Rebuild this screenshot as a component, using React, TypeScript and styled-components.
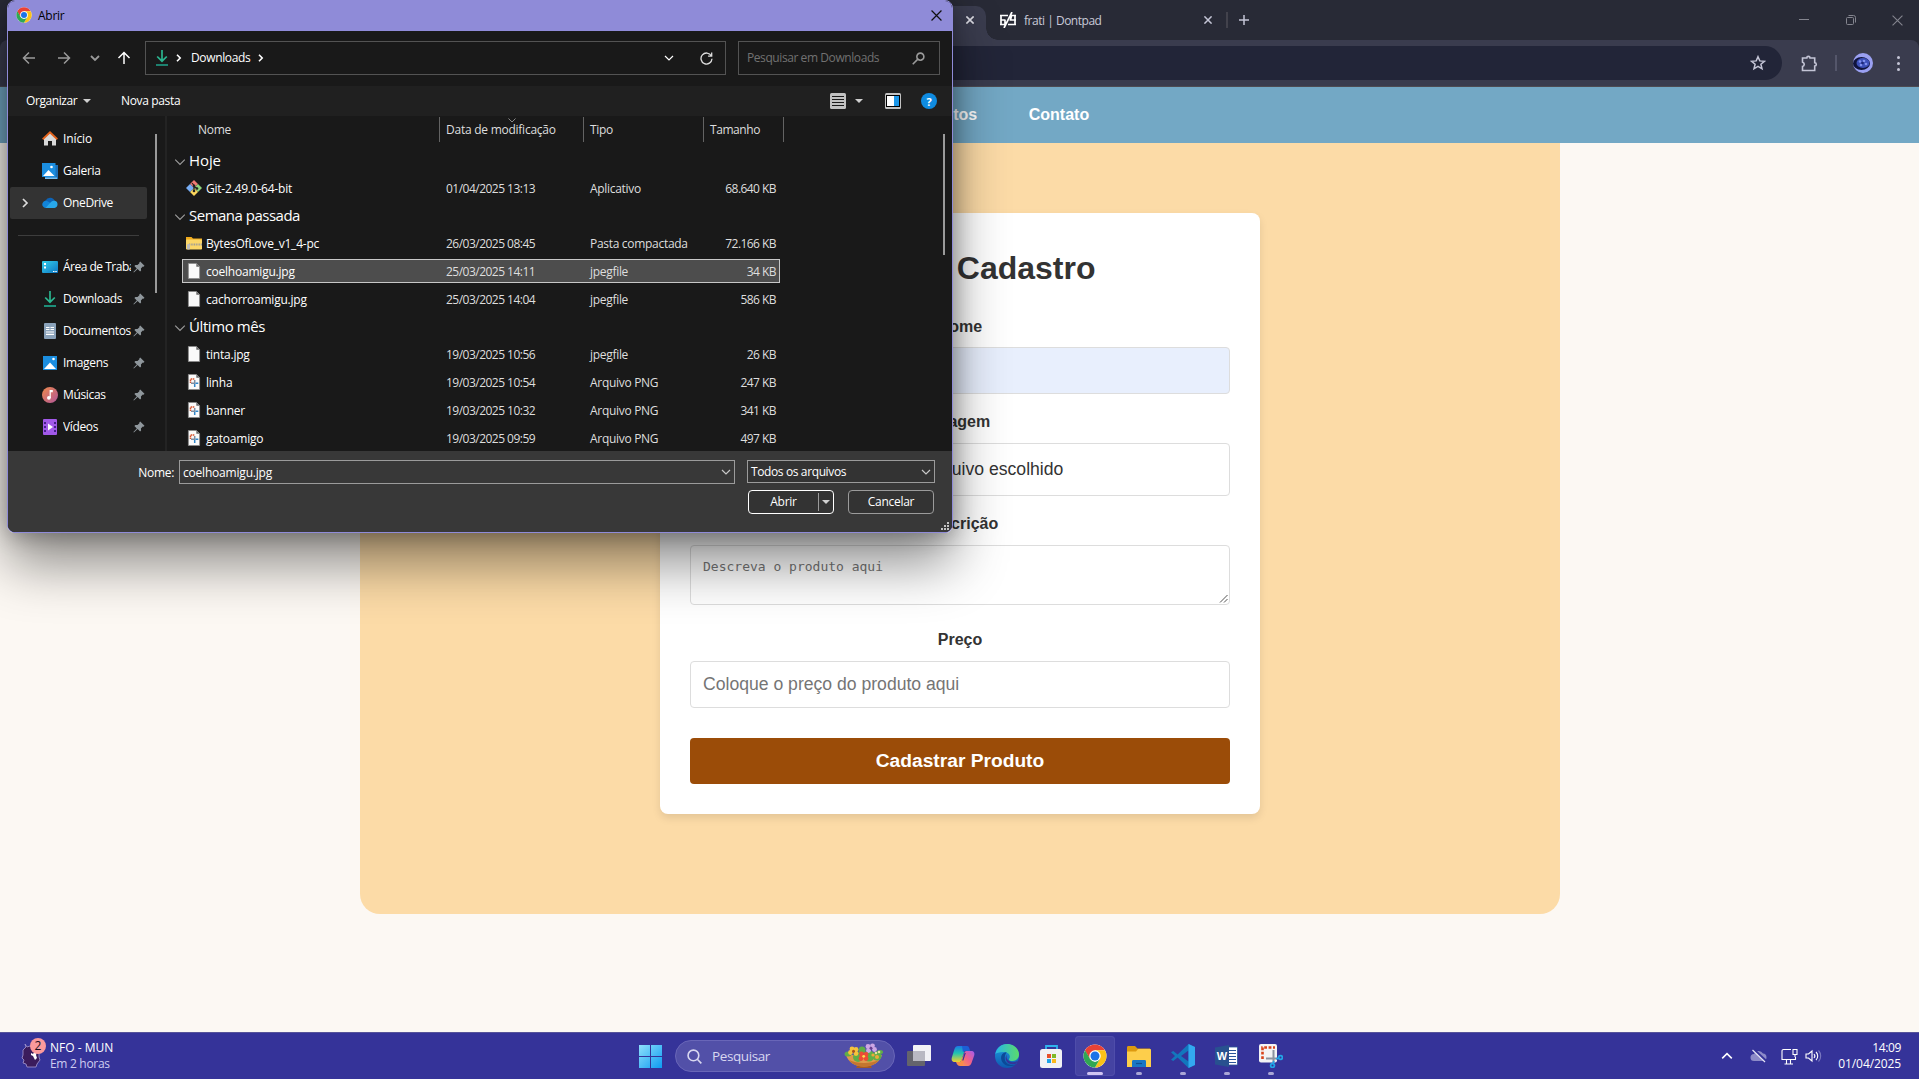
import React from "react";
import styled, { createGlobalStyle } from "styled-components";

const UI = '"Open Sans", "Noto Sans", sans-serif';
const ARIAL = '"Liberation Sans", Arial, sans-serif';

const GlobalStyle = createGlobalStyle`
  * { box-sizing: border-box; }
  html, body { margin: 0; padding: 0; overflow: hidden; background: #fcf8f3; }
  svg { display: block; flex: none; }
`;

const Desktop = styled.div`
  position: relative;
  display: grid;
  grid-template-rows: 1032px 47px;
  width: 1919px;
  height: 1079px;
  overflow: hidden;
  font-family: ${UI};
  font-size: 12px;
`;

const Txt = styled.span<{ $ls?: number; $lift?: number }>`
  padding-bottom: ${(p) => p.$lift ?? 0}px;
  white-space: nowrap;
  letter-spacing: ${(p) => p.$ls ?? -0.3}px;
`;

/* ---------- browser ---------- */

const Browser = styled.div`
  display: flex;
  flex-direction: column;
  background: #fcf8f3;
  min-height: 0;
`;

const TabStrip = styled.div`
  display: flex;
  align-items: center;
  height: 40px;
  padding-left: 748px;
  background: #282a36;
  color: #c8c9d8;
`;

const ActiveTab = styled.div`
  position: relative;
  display: flex;
  align-items: center;
  justify-content: flex-end;
  align-self: flex-end;
  width: 238px;
  height: 34px;
  padding: 0 12px 6px 0;
  border-radius: 10px 10px 0 0;
  background: #3a3c4e;
  &::after {
    content: "";
    position: absolute;
    right: -12px;
    bottom: 0;
    width: 12px;
    height: 12px;
    background: radial-gradient(circle at 100% 0, transparent 11.5px, #3a3c4e 12px);
  }
`;

const Tab = styled.div`
  display: flex;
  align-items: center;
  gap: 8px;
  width: 240px;
  height: 40px;
  padding: 0 14px 0 14px;
  & > svg:last-child { margin-left: auto; }
`;

const TabDivider = styled.i`
  width: 2px;
  height: 16px;
  background: #42424c;
`;

const NewTab = styled.div`
  display: flex;
  margin-left: 11px;
`;

const WindowButtons = styled.div`
  display: flex;
  align-items: center;
  gap: 35px;
  margin-left: auto;
  padding-right: 16px;
`;

const StripBack = styled.div`
  background: #282a36;
`;

const Toolbar = styled.div`
  display: flex;
  align-items: flex-start;
  height: 47px;
  padding: 6px 17px 0 40px;
  border-bottom: 1px solid #4d4b52;
  border-radius: 8px 8px 0 0;
  background: #3a3c4e;
`;

const Omnibox = styled.div`
  display: flex;
  align-items: center;
  justify-content: flex-end;
  width: 1742px;
  height: 34px;
  padding-right: 16px;
  border-radius: 17px;
  background: #222538;
`;

const ToolbarIcons = styled.div`
  display: flex;
  align-items: center;
  height: 34px;
  margin-left: 19px;
`;

const ToolbarDivider = styled.i`
  width: 2px;
  height: 16px;
  margin: 0 16px 0 17px;
  background: #54566a;
`;

const Dots = styled.div`
  display: flex;
  flex-direction: column;
  gap: 3px;
  margin-left: 24px;
  i { width: 3px; height: 3px; border-radius: 50%; background: #c4c5d6; }
`;

const SiteNav = styled.nav`
  display: flex;
  align-items: center;
  gap: 51.5px;
  height: 56px;
  padding: 0 0 0 907px;
  background: #73a8c5;
  color: #fff;
  font: bold 16px ${ARIAL};
`;

const Panel = styled.main`
  width: 1200px;
  height: 771px;
  margin-left: 360px;
  padding-top: 70px;
  border-radius: 0 0 20px 20px;
  background: #fcdba7;
`;

const Card = styled.form`
  display: flex;
  flex-direction: column;
  width: 600px;
  height: 601px;
  margin: 0 auto;
  padding: 30px;
  border-radius: 8px;
  background: #fff;
  box-shadow: 0 4px 8px rgba(0, 0, 0, 0.1);
  color: #333;
  font-family: ${ARIAL};
`;

const Heading = styled.h1`
  margin: 0 0 21px;
  padding-left: 6px;
  font-size: 32px;
  line-height: 50px;
  text-align: center;
`;

const Label = styled.label<{ $drop?: number }>`
  margin-bottom: ${(p) => 9 - (p.$drop ?? 0)}px;
  padding-top: ${(p) => p.$drop ?? 0}px;
  font-size: 16px;
  font-weight: bold;
  line-height: 24px;
  text-align: center;
`;

const Field = styled.div<{ $h: number; $gap: number; $fill?: string }>`
  display: flex;
  align-items: center;
  height: ${(p) => p.$h}px;
  margin-bottom: ${(p) => p.$gap}px;
  padding: 0 12px;
  border: 1px solid #ddd;
  border-radius: 4px;
  background: ${(p) => p.$fill ?? "#fff"};
  color: #757575;
  font-size: 17.6px;
  white-space: nowrap;
`;

const FileStatus = styled.span`
  margin-left: 152px;
  color: #333;
`;

const TextArea = styled(Field)`
  position: relative;
  align-items: flex-start;
  padding-top: 13px;
  font: 13px/15px "DejaVu Sans Mono", monospace;
`;

const ResizeCorner = styled.svg`
  position: absolute;
  right: 1px;
  bottom: 1px;
`;

const Submit = styled.button`
  height: 46px;
  padding: 0 0 1px;
  border: 0;
  border-radius: 4px;
  background: #9b4c08;
  color: #fff;
  font: bold 19.2px ${ARIAL};
`;

/* ---------- file dialog ---------- */

const Dialog = styled.section`
  position: absolute;
  left: 7px;
  top: 0;
  display: grid;
  grid-template-rows: 30px 55px 30px 335px 81px;
  width: 946px;
  height: 533px;
  border: 1px solid #8f8bd8;
  border-radius: 8px;
  overflow: hidden;
  background: #191919;
  color: #fff;
`;

const DialogShadow = styled.div`
  position: absolute;
  left: 7px;
  top: 0;
  width: 946px;
  height: 533px;
  border-radius: 8px;
  box-shadow: 0 31px 54px rgba(0, 0, 0, 0.44), 0 2px 21px rgba(0, 0, 0, 0.3);
`;

const TitleBar = styled.header`
  display: flex;
  align-items: center;
  gap: 6px;
  padding: 0 10px 2px 8px;
  background: #8f8bd8;
  color: #000;
  & > svg:last-child { margin-left: auto; }
`;

const AddressRow = styled.div`
  display: flex;
  align-items: center;
  padding: 0 12px 1px 14px;
`;

const NavButtons = styled.div`
  display: flex;
  align-items: center;
  width: 123px;
  & > :nth-child(2) { margin-left: 21px; }
  & > :nth-child(3) { margin-left: 18.5px; }
  & > :nth-child(4) { margin-left: 17px; }
`;

const AddressBox = styled.div`
  display: flex;
  align-items: center;
  width: 581px;
  height: 34px;
  padding: 0 12px 0 9px;
  border: 1px solid #535353;
`;

const Crumb = styled(Txt)`
  margin: 0 8px 0 9px;
`;

const CrumbStart = styled.div`
  display: flex;
  width: 27px;
  justify-content: space-between;
`;

const CrumbIcons = styled.div`
  display: flex;
  align-items: center;
  justify-content: space-between;
  width: 27px;
`;

const AddressTools = styled.div`
  display: flex;
  align-items: center;
  gap: 26px;
  margin-left: auto;
`;

const SearchBox = styled.div`
  display: flex;
  align-items: center;
  justify-content: space-between;
  width: 202px;
  height: 34px;
  margin-left: 12px;
  padding: 0 14px 0 8px;
  border: 1px solid #535353;
  color: #717171;
`;

const CommandBar = styled.div`
  display: flex;
  align-items: center;
  padding: 0 15px 0 18px;
  background: #202020;
`;

const Caret = styled.i`
  border: 4px solid transparent;
  border-top-color: #d0d0d0;
  border-bottom: 0;
`;

const Organize = styled.div`
  display: flex;
  align-items: center;
  gap: 6px;
  width: 95px;
`;

const CommandIcons = styled.div`
  display: flex;
  align-items: center;
  margin-left: auto;
  & > i { margin: 0 22px 0 9px; }
  & > svg + svg { margin-left: 20px; }
`;

const Body = styled.div`
  display: grid;
  grid-template-columns: 147px 12px 1fr;
  overflow: hidden;
`;

const Sidebar = styled.div`
  display: flex;
  flex-direction: column;
  padding: 7px 8px 0 2px;
`;

const SideItem = styled.div<{ $active?: boolean }>`
  display: grid;
  grid-template-columns: 32px 16px 68px 14px;
  align-items: center;
  width: 137px;
  height: 32px;
  border-radius: 2px;
  background: ${(p) => (p.$active ? "#333" : "transparent")};
  & > span { margin-left: 5px; }
`;

const SideLabel = styled(Txt)<{ $wide?: boolean }>`
  overflow: hidden;
  width: ${(p) => (p.$wide ? "auto" : "68px")};
`;

const Expander = styled.div`
  display: flex;
  padding-left: 10px;
`;

const PinSlot = styled.div`
  display: flex;
  padding-left: 7px;
`;

const SideDivider = styled.div`
  display: flex;
  align-items: center;
  height: 32px;
  padding: 0 8px;
  &::after { content: ""; width: 121px; height: 1px; background: #3d3d3d; }
`;

const SideScroll = styled.div`
  border-right: 2px solid #232323;
  padding-top: 18px;
  &::after { content: ""; display: block; width: 2px; height: 159px; background: #9a9a9a; }
`;

const ListArea = styled.div`
  display: grid;
  grid-template-columns: 1fr 9px;
  overflow: hidden;
`;

const ListScroll = styled.div`
  padding-top: 18px;
  &::after { content: ""; display: block; width: 2px; height: 121px; background: #9a9a9a; }
`;

const List = styled.div`
  display: flex;
  flex-direction: column;
  padding-left: 7px;
`;

const ListHeader = styled.div`
  display: grid;
  grid-template-columns: 266px 144px 120px 80px;
  height: 32px;
  padding-top: 1px;
  color: #dedede;
`;

const HeaderCell = styled.div<{ $pad: number }>`
  position: relative;
  display: flex;
  align-items: center;
  height: 25px;
  padding: 0 0 1px ${(p) => p.$pad}px;
  border-right: 1px solid #636363;
`;

const SortMark = styled.svg`
  position: absolute;
  left: 68px;
  top: 1px;
`;

const GroupRow = styled.div`
  display: flex;
  align-items: center;
  gap: 3px;
  height: 27px;
  color: #fff;
  font-size: 15px;
`;

const FileSlot = styled.div`
  display: flex;
  height: 28px;
  padding: 1px 0 3px 8px;
  flex: none;
`;

const FileRow = styled.div<{ $selected?: boolean }>`
  display: grid;
  grid-template-columns: 20px 240px 144px 127px 59px;
  align-items: center;
  width: 598px;
  height: 24px;
  padding-left: 3px;
  border: 1px solid ${(p) => (p.$selected ? "#c8c8c8" : "transparent")};
  background: ${(p) => (p.$selected ? "#4d4d4d" : "transparent")};
  color: #dedede;
`;

const FileName = styled(Txt)`
  color: #fff;
`;

const Size = styled(Txt)`
  text-align: right;
`;

const Footer = styled.footer`
  display: grid;
  grid-template-columns: 171px 556px 188px;
  grid-template-rows: 24px 24px;
  row-gap: 6px;
  align-content: start;
  padding-top: 9px;
  background: #383838;
  position: relative;
`;

const NameLabel = styled(Txt)`
  justify-self: end;
  align-self: center;
  margin-right: 5px;
`;

const Combo = styled.div<{ $h: number }>`
  display: flex;
  align-items: center;
  justify-content: space-between;
  height: ${(p) => p.$h}px;
  padding: 0 3px 0 3px;
  border: 1px solid #9b9b9b;
  background: ${(p) => (p.$h === 24 ? "#383838" : "#333")};
`;

const FilterCombo = styled(Combo)`
  margin-left: 12px;
  width: 188px;
`;

const Buttons = styled.div`
  grid-column: 3;
  display: flex;
  gap: 14px;
  padding-left: 13px;
`;

const DialogButton = styled.div<{ $main?: boolean }>`
  display: flex;
  align-items: center;
  justify-content: center;
  width: 86px;
  flex: none;
  height: 24px;
  border: 1px solid ${(p) => (p.$main ? "#fff" : "#9b9b9b")};
  border-radius: 4px;
  background: #333;
`;

const MainLabel = styled(Txt)`
  width: 69px;
  text-align: center;
`;

const Split = styled.div`
  display: flex;
  align-items: center;
  width: 15px;
  height: 18px;
  padding-left: 3px;
  border-left: 1px solid #9b9b9b;
`;

const Grip = styled.svg`
  position: absolute;
  right: 3px;
  bottom: 2px;
`;

/* ---------- taskbar ---------- */

const Taskbar = styled.footer`
  display: grid;
  grid-template-columns: 628px 47px 222px 396px 1fr;
  align-items: center;
  border-top: 1px solid #56539a;
  background: #353399;
  color: #fff;
`;

const Widget = styled.div`
  display: flex;
  align-items: center;
  gap: 4px;
  padding-left: 20px;
`;

const TwoLines = styled.div<{ $right?: boolean }>`
  display: flex;
  flex-direction: column;
  line-height: 16px;
  text-align: ${(p) => (p.$right ? "right" : "left")};
  & > span + span { color: ${(p) => (p.$right ? "#fff" : "#cfcdf0")}; }
`;

const Start = styled.div`
  display: flex;
  padding: 1px 0 0 11px;
`;

const SearchPill = styled.div`
  display: flex;
  align-items: center;
  width: 220px;
  height: 32px;
  padding: 0 10px 0 11px;
  border: 1px solid #6966b8;
  border-radius: 16px;
  background: #5250a8;
  color: #d8d7f0;
  font-size: 13.5px;
  & > span { margin-left: 10px; }
  & > svg:last-child { margin-left: auto; }
`;

const Apps = styled.div`
  display: grid;
  grid-template-columns: repeat(9, 44px);
`;

const TaskButton = styled.div<{ $state: "none" | "open" | "active" }>`
  display: flex;
  flex-direction: column;
  align-items: center;
  justify-self: center;
  width: 40px;
  height: 40px;
  padding-top: 8px;
  border-radius: 4px;
  background: ${(p) => (p.$state === "active" ? "#4543a2" : "transparent")};
  box-shadow: ${(p) => (p.$state === "active" ? "inset 0 0 0 1px #4f4daa" : "none")};
  &::after {
    content: "";
    width: ${(p) => (p.$state === "active" ? 16 : p.$state === "open" ? 6 : 0)}px;
    height: 3px;
    margin-top: 4px;
    border-radius: 2px;
    background: ${(p) => (p.$state === "active" ? "#cfc4f2" : "#a9a6d6")};
  }
`;

const Tray = styled.div`
  display: flex;
  align-items: center;
  justify-content: flex-end;
  padding-right: 18px;
`;

const TrayIcons = styled.div`
  display: grid;
  grid-template-columns: 10px 50px 24px 18px;
  align-items: center;
  margin-right: 15px;
  & > :nth-child(2) { margin-left: 19px; }
`;

/* ---------- drawings ---------- */

const X = ({ s = 10, c, w = 1 }: { s?: number; c: string; w?: number }) => (
  <svg width={s} height={s} viewBox="0 0 10 10" stroke={c} strokeWidth={w} fill="none">
    <path d="M.5.5l9 9M9.5.5l-9 9" />
  </svg>
);

const Chev = ({ d, s = 10, c = "#fff", w = 1.4 }: { d: "down" | "right" | "up"; s?: number; c?: string; w?: number }) => (
  <svg width={s} height={s} viewBox="0 0 10 10" fill="none" stroke={c} strokeWidth={w}>
    <path d={d === "down" ? "M1 3l4 4 4-4" : d === "up" ? "M1 7l4-4 4 4" : "M3 1l4 4-4 4"} />
  </svg>
);

const CrumbChevron = () => (
  <svg width="6" height="8" viewBox="0 0 6 8" fill="none" stroke="#fff" strokeWidth="1.6">
    <path d="M1 .8L4.200 4 1 7.200" />
  </svg>
);

const Arrow = ({ r, c }: { r: number; c: string }) => (
  <svg width="14" height="14" viewBox="0 0 14 14" fill="none" stroke={c} strokeWidth="1.5">
    <path d="M13 7H1.5M7 1.5L1.5 7 7 12.5" transform={`rotate(${r} 7 7)`} />
  </svg>
);

const ChromeLogo = ({ s }: { s: number }) => (
  <svg width={s} height={s} viewBox="0 0 48 48">
    <circle cx="24" cy="24" r="23" fill="#fff" />
    <path fill="#e94235" d="M4.1 12.5A23 23 0 0 1 43.9 12.5H24A11.5 11.5 0 0 0 14 29.7z" />
    <path fill="#e94235" d="M4.1 12.5L14 29.7 24 24V12.5z" />
    <path fill="#fbc116" d="M43.9 12.5A23 23 0 0 1 24 47l10-17.3L24 12.5z" />
    <path fill="#30a753" d="M24 47A23 23 0 0 1 4.1 12.5L14 29.7 24 35.5l10-5.8z" />
    <circle cx="24" cy="24" r="11.5" fill="#fff" />
    <circle cx="24" cy="24" r="9" fill="#1a73e8" />
  </svg>
);

const DownloadIcon = ({ w = 14 }: { w?: number }) => (
  <svg width={w} height="16" viewBox="0 0 14 16" fill="none" strokeWidth="1.7">
    <path d="M7 0v10.500M2.200 6.500L7 11.200l4.800-4.700" stroke="#2bb58f" />
    <path d="M1 15h12" stroke="#1fa58c" />
  </svg>
);

const Pin = () => (
  <svg width="12" height="12" viewBox="0 0 12 12" fill="#8f979c">
    <path d="M7.200.5L11.500 4.800l-.9.900-.8-.1-1.900 1.900.2 2.100-1 1L4.600 8.100.9 11.500l-.5-.4L3.800 7.400 1.400 4.900l1-1 2.100.2 1.900-1.900-.1-.8z" />
  </svg>
);

const HomeIcon = () => (
  <svg width="16" height="16" viewBox="0 0 16 16">
    <path fill="#d9d9d9" d="M2 7l6-5 6 5v7.500h-4V10H6v4.500H2z" />
    <path fill="none" stroke="#e2621b" strokeWidth="1.900" d="M.7 8.200L8 1.400l7.300 6.800" />
  </svg>
);

const PictureIcon = ({ stacked }: { stacked?: boolean }) => (
  <svg width="16" height="16" viewBox="0 0 16 16">
    {stacked && <path fill="#1b6fb8" d="M3 2h13v14H3z" />}
    {stacked && <path fill="#75bff0" d="M3 14.500h12V16H3z" />}
    <path fill="#1b8ee0" d={stacked ? "M0 0h13.500v14H0z" : "M1 1h14v14H1z"} />
    <path fill="#fff" d={stacked ? "M1 13l5.500-6 6 6z" : "M2 14l6-6.500 6 6.500z"} />
    <circle cx={stacked ? 9.5 : 11.5} cy="4" r="1.300" fill="#fff" />
  </svg>
);

const CloudIcon = () => (
  <svg width="16" height="12" viewBox="0 0 16 12">
    <path fill="#0d63b5" d="M4 10a3.500 3.500 0 0 1-.4-6.500A5 5 0 0 1 12.800 4L8 9z" />
    <path fill="#1284d8" d="M3.600 11A3.600 3.600 0 1 1 6 4.500L13 9z" />
    <path fill="#28a8ea" d="M3.500 11l5-5.500a4 4 0 0 1 4.300-1.700A3.700 3.700 0 0 1 12.500 11z" />
  </svg>
);

const DesktopIcon = () => (
  <svg width="16" height="12" viewBox="0 0 16 12">
    <defs>
      <linearGradient id="desk" x1="0" x2="1" y1="0" y2="1">
        <stop stopColor="#35d0ea" />
        <stop offset="1" stopColor="#0d76c4" />
      </linearGradient>
    </defs>
    <rect width="16" height="12" rx="1" fill="url(#desk)" />
    <path fill="#fff" d="M2 2h2v2H2zM2 5.500h2v2H2zM11 10h1.500v1H11zM13.300 10h1.500v1h-1.500z" />
  </svg>
);

const DocIcon = () => (
  <svg width="16" height="16" viewBox="0 0 16 16">
    <rect x="2" width="12" height="16" rx="1" fill="#8aa2ba" />
    <path stroke="#fff" strokeWidth="1.200" d="M4 4.500h3.500M4 6.500h3.500M8.500 4.500H12M8.500 6.500H12M4 9h8M4 11.300h8" />
  </svg>
);

const MusicIcon = () => (
  <svg width="16" height="16" viewBox="0 0 16 16">
    <defs>
      <linearGradient id="mus" x1="0" x2="1" y1="0" y2="1">
        <stop stopColor="#f08a4b" />
        <stop offset="1" stopColor="#b0569a" />
      </linearGradient>
    </defs>
    <circle cx="8" cy="8" r="8" fill="url(#mus)" />
    <circle cx="6.900" cy="10.800" r="1.900" fill="#fff" />
    <path fill="#fff" d="M7.600 3h3.200v2.300H8.800V11H7.600z" />
  </svg>
);

const VideoIcon = () => (
  <svg width="16" height="16" viewBox="0 0 16 16">
    <rect x="1" width="14" height="16" rx="1" fill="#a259ea" />
    <path fill="#47208a" d="M2 3h2v2H2zM2 7h2v2H2zM2 11h2v2H2zM12 3h2v2h-2zM12 7h2v2h-2zM12 11h2v2h-2z" />
    <path fill="#fff" d="M6 4.500l5 3.500-5 3.500z" />
  </svg>
);

const FileIcon = ({ png }: { png?: boolean }) => (
  <svg width="16" height="16" viewBox="0 0 16 16">
    <path fill="#fafafa" stroke="#8a8a8a" strokeWidth=".8" d="M2.400.4h8l3.200 3.200v12H2.400z" />
    <path fill="#666" d="M10.300.4l3.300 3.300h-3.300z" />
    {png && (
      <g fill="none" strokeWidth="1.500">
        <path stroke="#d8502a" strokeDasharray="1.500 .6" d="M4.500 9V5h4" />
        <path stroke="#7f8da0" d="M5 9.200h4.500M8.700 6v4" />
        <path stroke="#2f86c9" d="M9.500 9.200h2.800M8.700 10v3" />
      </g>
    )}
  </svg>
);

const GitIcon = () => (
  <svg width="16" height="16" viewBox="0 0 16 16">
    <path fill="#f07a72" d="M8 0l4 4-4 4-4-4z" />
    <path fill="#8fd47c" d="M12 4l4 4-4 4-4-4z" />
    <path fill="#fbd65c" d="M8 8l4 4-4 4-4-4z" />
    <path fill="#78aef5" d="M4 4l4 4-4 4-4-4z" />
    <path stroke="#222" strokeWidth="1.200" fill="none" d="M6 3l2 2.500V11M8 6.500l3 2" />
    <g fill="#222"><circle cx="8" cy="5.800" r="1.300" /><circle cx="8" cy="11" r="1.300" /><circle cx="11" cy="8.500" r="1.300" /></g>
  </svg>
);

const ZipIcon = () => (
  <svg width="16" height="14" viewBox="0 0 16 14">
    <path fill="#f0ab1c" d="M0 1h5.500L7 2.500h9V7H0z" />
    <rect y="3.500" width="16" height="10" rx=".8" fill="#fbd668" />
    <path stroke="#9a9a9a" strokeWidth="2" strokeDasharray="1 .7" d="M3 8.500h13" />
    <rect x="1" y="8" width="3" height="5.500" rx="1" fill="#bdbdbd" />
  </svg>
);

const ViewIcon = () => (
  <svg width="16" height="16" viewBox="0 0 16 16">
    <rect width="16" height="16" rx="1.500" fill="#c2c2c2" />
    <path stroke="#1a1a1a" strokeWidth="1" d="M2 3.500h12M2 6.500h12M2 9.500h12M2 12.500h12" />
  </svg>
);

const PaneIcon = () => (
  <svg width="16" height="16" viewBox="0 0 16 16">
    <rect width="16" height="16" rx="1.500" fill="#c2c2c2" />
    <path fill="#000" d="M1 2h14v12H1z" />
    <path fill="#fff" d="M2 3h7v10H2z" />
    <path fill="#1b96e8" d="M9 3h5v10H9z" />
  </svg>
);

const Help = styled.b`
  display: flex;
  align-items: center;
  justify-content: center;
  width: 16px;
  height: 16px;
  margin-left: 20px;
  border-radius: 50%;
  background: #0f8be0;
  font-size: 11px;
`;

const Magnifier = ({ s, c, w, flip }: { s: number; c: string; w: number; flip?: boolean }) => (
  <svg width={s} height={s} viewBox="0 0 14 14" fill="none" stroke={c} strokeWidth={w}>
    <g transform={flip ? "matrix(-1 0 0 1 14 0)" : undefined}>
      <circle cx={flip ? 5 : 6} cy={flip ? 5 : 6} r={flip ? 3.8 : 5} />
      <path d={flip ? "M7.700 7.700l5.500 5.500" : "M9.600 9.600l3.800 3.800"} />
    </g>
  </svg>
);

const Bowl = () => (
  <svg width="40" height="26" viewBox="0 0 40 26">
    <path fill="#a65a22" d="M14 22h12l2 3H12z" />
    <path fill="#e09a4a" d="M2 12h36c-2 7-9 11.500-18 11.500S4 19 2 12z" />
    <path fill="#c4762e" d="M5 17c8 4 22 4 30 0-4 5-9 6.500-15 6.500S9 22 5 17z" />
    <g fill="#5fae48"><ellipse cx="4" cy="11" rx="3.500" ry="2.500" /><circle cx="14" cy="14" r="5" /><circle cx="25" cy="13" r="5.500" /><circle cx="33" cy="13" r="4.500" /><circle cx="18" cy="7" r="3.500" /><ellipse cx="36" cy="9" rx="3" ry="2" /></g>
    <g fill="#f5c33b"><circle cx="8" cy="6" r="2.400" /><circle cx="12" cy="6.500" r="2.400" /><circle cx="6.500" cy="9.500" r="2.400" /><circle cx="12" cy="10.500" r="2.400" /></g>
    <circle cx="9.500" cy="8.300" r="1.500" fill="#a8531b" />
    <g fill="#cda6e4"><circle cx="24" cy="3.500" r="2.400" /><circle cx="28.500" cy="2.800" r="2.400" /><circle cx="30.500" cy="6.500" r="2.400" /><circle cx="24.500" cy="7.500" r="2.400" /></g>
    <circle cx="27" cy="5.200" r="1.400" fill="#6c3e92" />
    <g fill="#ef4b35"><circle cx="17.500" cy="11" r="2.400" /><circle cx="22" cy="11.500" r="2.400" /><circle cx="17" cy="15.500" r="2.400" /><circle cx="22" cy="15.500" r="2.400" /></g>
    <circle cx="19.700" cy="13.300" r="1.400" fill="#ffd84d" />
    <g fill="#f0a93a"><circle cx="33" cy="14" r="2" /><circle cx="29" cy="12" r="1.600" /></g>
    <g fill="#e9e2a0"><circle cx="35" cy="9" r="1.300" /><circle cx="32" cy="10" r="1.200" /></g>
  </svg>
);

const TaskViewIcon = () => (
  <svg width="24" height="24" viewBox="0 0 24 24">
    <rect x="6" y="1" width="18" height="16" rx="1" fill="#f2f2f5" />
    <rect y="7" width="18" height="15" rx="1" fill="#64646c" />
    <path fill="#b9b9c2" d="M6 7h12v10H6z" />
  </svg>
);

const CopilotIcon = () => (
  <svg width="24" height="24" viewBox="0 0 24 24" strokeLinejoin="round">
    <defs>
      <linearGradient id="cpA" x1="0" x2="0" y1="0" y2="1">
        <stop stopColor="#1b78e6" /><stop offset=".45" stopColor="#21c3b0" /><stop offset="1" stopColor="#f3d02c" />
      </linearGradient>
      <linearGradient id="cpB" x1="1" x2="0" y1="0" y2="1">
        <stop stopColor="#a35cf0" /><stop offset=".5" stopColor="#f0608a" /><stop offset="1" stopColor="#fb9a45" />
      </linearGradient>
    </defs>
    <path fill="url(#cpA)" d="M7 2h8l-4.500 14.500C10 18 9 18 8 18H4c-3 0-4-2-3-5l2.500-8C4.200 3 5.200 2 7 2z" />
    <path fill="#1c5fd6" d="M11 2h5c1.500 0 2 1 2.500 3l.8 2H14c-1 0-1.600.6-2 1.500z" />
    <path fill="url(#cpB)" d="M15.500 7H20c3 0 4 2 3 5l-2.500 7c-.8 2-1.800 3-3.500 3H9.500l3-11c.6-2 1.500-4 3-4z" />
    <path fill="#f78c4a" d="M5 18h4.500l2-5 2 1-2 8H9c-2 0-3-1.500-4-4z" />
    <path fill="#353399" d="M13.500 9l-2.300 7.500h1.200l2.400-7.500z" />
  </svg>
);

const EdgeIcon = () => (
  <svg width="24" height="24" viewBox="0 0 24 24">
    <defs>
      <linearGradient id="edA" x1="0" x2="1"><stop stopColor="#27b4e8" /><stop offset="1" stopColor="#5bdc6a" /></linearGradient>
      <linearGradient id="edB" x1="0" x2="0" y1="0" y2="1"><stop stopColor="#1ea0e0" /><stop offset="1" stopColor="#0f58b0" /></linearGradient>
    </defs>
    <circle cx="12" cy="12" r="12" fill="url(#edB)" />
    <path fill="url(#edA)" d="M.3 10C1.500 4 6.300 0 12 0c7 0 12 5 12 10.500 0 4-3 6.500-6.500 6.500-2.500 0-4-1-3.500-2 1.500-1.500 1.300-6-3.500-6.800C6 7.500 1.500 9 .3 10z" />
    <path fill="#0c4a98" d="M10.500 8.300C5 9.500 5 16 8.500 19.500c3.500 3.500 9 3 12.300.9C16 22.300 9 20 9.800 13c.2-2 1-3.500 2-4.400z" />
    <path fill="#353399" d="M12 10.500c-1 2-.5 5 2.500 6.800 2.700 1.500 6 1 8.500-.8-.7 1.500-1.500 2.500-2.600 3.400-3.600 1-7.400.1-9-2.900-1.300-2.500-.9-5 .6-6.500z" />
  </svg>
);

const StoreIcon = () => (
  <svg width="24" height="24" viewBox="0 0 24 24">
    <path fill="none" stroke="#2fb2ee" strokeWidth="1.800" d="M7 6V2h11v4" />
    <rect x="1" y="5" width="22" height="19" rx="2.500" fill="#f1f1f4" />
    <path fill="#e8502a" d="M8 10h4v4H8z" /><path fill="#7fb92a" d="M13 10h4v4h-4z" />
    <path fill="#1fa3e8" d="M8 15h4v4H8z" /><path fill="#fbb81b" d="M13 15h4v4h-4z" />
  </svg>
);

const FolderIcon = () => (
  <svg width="24" height="24" viewBox="0 0 24 24">
    <path fill="#dd9a10" d="M0 3.500C0 2.500.6 2 1.500 2H8l2.500 2.500H23V9H0z" />
    <path fill="#fdce4b" d="M0 7.500h9L11 5h12c.7 0 1 .4 1 1v17H0z" />
    <path fill="#1976c5" d="M5 17.500c0-1 .6-1.500 1.500-1.500h11c1 0 1.500.5 1.500 1.500V23H5z" />
    <path stroke="#0f4f90" strokeWidth="1.200" d="M9 19.500h6" />
  </svg>
);

const CodeIcon = () => (
  <svg width="24" height="24" viewBox="0 0 24 24">
    <path fill="#1277bd" d="M17.500 0L6.600 10.400 2.300 7 0 8.200 4 12 0 15.800 2.300 17l4.300-3.400L17.500 24 24 21V3zM17.500 6.500v11L10 12z" />
    <path fill="#33a9f0" d="M17.500 0L24 3v18l-6.500 3z" />
  </svg>
);

const WordIcon = () => (
  <svg width="24" height="24" viewBox="0 0 24 24">
    <path fill="#fff" stroke="#2b579a" strokeWidth=".8" d="M12 3h10.500v18H12z" />
    <path stroke="#2b579a" strokeWidth="1.200" d="M14 6.500h7M14 9.500h7M14 12.500h7M14 15.500h7M14 18.500h7" />
    <path fill="#28518f" d="M0 3.500L14 1v22L0 20.500z" />
    <text x="7" y="16" fill="#fff" fontFamily={ARIAL} fontSize="11" fontWeight="bold" textAnchor="middle">W</text>
  </svg>
);

const SnipIcon = () => (
  <svg width="24" height="24" viewBox="0 0 24 24">
    <rect width="18" height="18.500" rx="2" fill="#f3f3f5" />
    <path fill="none" stroke="#d9441c" strokeWidth="2.600" strokeDasharray="2.800 1.600" d="M3.500 15V3.500H16" />
    <path fill="none" stroke="#8b93a0" strokeWidth="2" d="M7 14.500h11M14.500 6v12" />
    <g fill="none" stroke="#22a4e6" strokeWidth="1.800"><circle cx="21.500" cy="13.500" r="1.900" /><circle cx="13.500" cy="21.500" r="1.900" /><path d="M17 14.800l3-.8M14.800 17l-.8 3" /></g>
  </svg>
);

const WindowsIcon = () => (
  <svg width="23" height="23" viewBox="0 0 23 23">
    <defs>
      <linearGradient id="win" x1="0" x2="1" y1="0" y2="1" gradientUnits="userSpaceOnUse" gradientTransform="scale(23)">
        <stop stopColor="#8fe0fb" /><stop offset="1" stopColor="#0d9bf2" />
      </linearGradient>
    </defs>
    <path fill="url(#win)" d="M0 0h11v11H0zM12 0h11v11H12zM0 12h11v11H0zM12 12h11v11H12z" />
  </svg>
);

const LeagueIcon = () => (
  <svg width="26" height="32" viewBox="0 2 26 32" overflow="visible">
    <path fill="#3b1c5c" stroke="#a79ad0" strokeWidth=".8" d="M5 6l2 3 3-1 4 2 4 3 1 2v4l1 3-3 4-1 3H7l-1-3-3-1 1-3-2-2 1-3 0-5 3-3z" />
    <path fill="#fff" d="M11 15l2 1 2-3 2 1-1 3 1 3-2 2-2-4-2-1z" />
    <circle cx="18" cy="8" r="8" fill="#fb9a9c" />
    <text x="18" y="12.300" textAnchor="middle" fontFamily={UI} fontSize="12" fill="#1a1020">2</text>
  </svg>
);

const Avatar = () => (
  <svg width="20" height="20" viewBox="0 0 20 20">
    <circle cx="10" cy="10" r="10" fill="#9aa0f2" />
    <ellipse cx="8.500" cy="10.500" rx="8.500" ry="6.500" fill="#10143c" />
    <ellipse cx="10" cy="10" rx="6.500" ry="5" fill="#3c4fb8" />
    <g fill="#8090ee"><circle cx="7" cy="8.500" r="1.300" /><circle cx="11" cy="8" r="1.300" /><circle cx="13" cy="11" r="1.300" /><circle cx="8" cy="12" r="1.300" /></g>
    <circle cx="9.500" cy="10" r="1.300" fill="#1d2878" />
  </svg>
);

/* ---------- content ---------- */

type Place = { name: string; icon: React.ReactNode; pinned?: boolean; active?: boolean; ls?: number };

const home: Place[] = [
  { name: "Início", icon: <HomeIcon />, ls: -0.1 },
  { name: "Galeria", icon: <PictureIcon stacked /> },
  { name: "OneDrive", icon: <CloudIcon />, active: true, ls: -0.35 },
];

const pinned: Place[] = [
  { name: "Área de Trabalho", icon: <DesktopIcon />, pinned: true, ls: -0.5 },
  { name: "Downloads", icon: <DownloadIcon w={16} />, pinned: true, ls: -0.38 },
  { name: "Documentos", icon: <DocIcon />, pinned: true, ls: -0.35 },
  { name: "Imagens", icon: <PictureIcon />, pinned: true, ls: -0.35 },
  { name: "Músicas", icon: <MusicIcon />, pinned: true, ls: -0.35 },
  { name: "Vídeos", icon: <VideoIcon />, pinned: true, ls: -0.35 },
];

type Item = { name: string; icon: React.ReactNode; date: string; type: string; size: string; selected?: boolean };

const groups: { title: string; ls: number; items: Item[] }[] = [
  {
    title: "Hoje",
    ls: -0.1,
    items: [{ name: "Git-2.49.0-64-bit", icon: <GitIcon />, date: "01/04/2025 13:13", type: "Aplicativo", size: "68.640 KB" }],
  },
  {
    title: "Semana passada",
    ls: -0.5,
    items: [
      { name: "BytesOfLove_v1_4-pc", icon: <ZipIcon />, date: "26/03/2025 08:45", type: "Pasta compactada", size: "72.166 KB" },
      { name: "coelhoamigu.jpg", icon: <FileIcon />, date: "25/03/2025 14:11", type: "jpegfile", size: "34 KB", selected: true },
      { name: "cachorroamigu.jpg", icon: <FileIcon />, date: "25/03/2025 14:04", type: "jpegfile", size: "586 KB" },
    ],
  },
  {
    title: "Último mês",
    ls: -0.4,
    items: [
      { name: "tinta.jpg", icon: <FileIcon />, date: "19/03/2025 10:56", type: "jpegfile", size: "26 KB" },
      { name: "linha", icon: <FileIcon png />, date: "19/03/2025 10:54", type: "Arquivo PNG", size: "247 KB" },
      { name: "banner", icon: <FileIcon png />, date: "19/03/2025 10:32", type: "Arquivo PNG", size: "341 KB" },
      { name: "gatoamigo", icon: <FileIcon png />, date: "19/03/2025 09:59", type: "Arquivo PNG", size: "497 KB" },
    ],
  },
];

const apps: { icon: React.ReactNode; state: "none" | "open" | "active" }[] = [
  { icon: <TaskViewIcon />, state: "none" },
  { icon: <CopilotIcon />, state: "none" },
  { icon: <EdgeIcon />, state: "none" },
  { icon: <StoreIcon />, state: "none" },
  { icon: <ChromeLogo s={24} />, state: "active" },
  { icon: <FolderIcon />, state: "open" },
  { icon: <CodeIcon />, state: "open" },
  { icon: <WordIcon />, state: "open" },
  { icon: <SnipIcon />, state: "open" },
];

const SidePlace = ({ p }: { p: Place }) => (
  <SideItem $active={p.active}>
    <Expander>{p.active && <Chev d="right" c="#ddd" w={1.7} />}</Expander>
    {p.icon}
    <SideLabel $ls={p.ls} $lift={2} $wide={!p.pinned}>{p.name}</SideLabel>
    <PinSlot>{p.pinned && <Pin />}</PinSlot>
  </SideItem>
);

const BrowserWindow = () => (
  <Browser>
    <TabStrip>
      <ActiveTab><X s={8} c="#dcdce4" w={2} /></ActiveTab>
      <Tab>
        <svg width="16" height="16" viewBox="0 0 16 16" fill="none" stroke="#fff" strokeWidth="1.700">
          <path d="M0 3.500h8M1 3.500v9M1 8h4.500M0 12.500h5V8M16 3.500h-4.500L10.500 8H16M15 3.500v9M16 12.500H8M12 0L4 16" />
        </svg>
        <Txt $ls={-0.48}>frati | Dontpad</Txt>
        <X s={8} c="#c4c5d6" w={1.9} />
      </Tab>
      <TabDivider />
      <NewTab>
        <svg width="10" height="10" viewBox="0 0 10 10" stroke="#c4c5d6" strokeWidth="1.500"><path d="M5 0v10M0 5h10" /></svg>
      </NewTab>
      <WindowButtons>
        <svg width="12" height="10" viewBox="0 0 12 10" stroke="#84858f"><path d="M1 4.500h10" /></svg>
        <svg width="12" height="12" viewBox="0 0 12 12" fill="none" stroke="#84858f">
          <rect x="1.500" y="3.500" width="7" height="7" rx="1" /><path d="M3.500 1.500h5a2 2 0 0 1 2 2v5" />
        </svg>
        <X s={11} c="#84858f" />
      </WindowButtons>
    </TabStrip>
    <StripBack>
      <Toolbar>
        <Omnibox>
          <svg width="16" height="16" viewBox="0 0 16 16" fill="none" stroke="#c4c5d6" strokeWidth="1.500">
            <path d="M8 1.700l1.800 4.200 4.600.4-3.500 3 1.100 4.500L8 11.400l-4 2.400 1.100-4.500-3.500-3 4.600-.4z" />
          </svg>
        </Omnibox>
        <ToolbarIcons>
          <svg width="17" height="17" viewBox="0 0 17 17" fill="none" stroke="#c4c5d6" strokeWidth="1.600">
            <path d="M1.500 3h4.300a1.600 1.600 0 0 1 3.200 0h4.700v4.800a1.600 1.600 0 0 1 0 3.200v4.500H1.500v-4a2.200 2.200 0 0 0 0-4.300z" />
          </svg>
          <ToolbarDivider />
          <Avatar />
          <Dots><i /><i /><i /></Dots>
        </ToolbarIcons>
      </Toolbar>
    </StripBack>
    <SiteNav>
      <span>Produtos</span>
      <span>Contato</span>
    </SiteNav>
    <Panel>
      <Card>
        <Heading>Área de Cadastro</Heading>
        <Label $drop={1}>Nome</Label>
        <Field $h={47} $gap={16} $fill="#e8effd" />
        <Label>Imagem</Label>
        <Field $h={53} $gap={16}>
          <FileStatus>Nenhum arquivo escolhido</FileStatus>
        </Field>
        <Label>Descrição</Label>
        <TextArea $h={60} $gap={23}>
          Descreva o produto aqui
          <ResizeCorner width="9" height="9" viewBox="0 0 9 9" stroke="#555" strokeWidth="1">
            <path d="M1 8.500L8.500 1M5 8.500L8.500 5" />
          </ResizeCorner>
        </TextArea>
        <Label>Preço</Label>
        <Field $h={47} $gap={30}>Coloque o preço do produto aqui</Field>
        <Submit type="button">Cadastrar Produto</Submit>
      </Card>
    </Panel>
  </Browser>
);

const OpenDialog = () => (
  <Dialog>
    <TitleBar>
      <ChromeLogo s={16} />
      <Txt $ls={-0.25}>Abrir</Txt>
      <X s={11} c="#111" w={1.1} />
    </TitleBar>
    <AddressRow>
      <NavButtons>
        <Arrow r={0} c="#9a9a9a" />
        <Arrow r={180} c="#9a9a9a" />
        <Chev d="down" c="#9a9a9a" w={1.8} />
        <Arrow r={90} c="#fff" />
      </NavButtons>
      <AddressBox>
        <CrumbIcons>
          <DownloadIcon />
          <CrumbChevron />
        </CrumbIcons>
        <Crumb $ls={-0.35} $lift={1}>Downloads</Crumb>
        <CrumbChevron />
        <AddressTools>
          <Chev d="down" w={1.2} />
          <svg width="13" height="13" viewBox="0 0 13 13" fill="none" stroke="#ddd" strokeWidth="1.300">
            <path d="M11.300 3.800A5.500 5.500 0 1 0 12 6.800M11.700.5v3.600H8.100" />
          </svg>
        </AddressTools>
      </AddressBox>
      <SearchBox>
        <Txt $ls={-0.42} $lift={1}>Pesquisar em Downloads</Txt>
        <Magnifier s={13} c="#9a9a9a" w={1.7} flip />
      </SearchBox>
    </AddressRow>
    <CommandBar>
      <Organize><Txt $ls={-0.42} $lift={2}>Organizar</Txt><Caret /></Organize>
      <Txt $ls={-0.35} $lift={2}>Nova pasta</Txt>
      <CommandIcons>
        <ViewIcon />
        <Caret />
        <PaneIcon />
        <Help>?</Help>
      </CommandIcons>
    </CommandBar>
    <Body>
      <Sidebar>
        {home.map((p) => <SidePlace key={p.name} p={p} />)}
        <SideDivider />
        {pinned.map((p) => <SidePlace key={p.name} p={p} />)}
      </Sidebar>
      <SideScroll />
      <ListArea>
        <List>
          <ListHeader>
            <HeaderCell $pad={24}><Txt>Nome</Txt></HeaderCell>
            <HeaderCell $pad={6}>
              <Txt $ls={-0.25}>Data de modificação</Txt>
              <SortMark width="8" height="5" viewBox="0 0 8 5" fill="none" stroke="#8a8a8a"><path d="M.5.500L4 4 7.500.500" /></SortMark>
            </HeaderCell>
            <HeaderCell $pad={6}><Txt>Tipo</Txt></HeaderCell>
            <HeaderCell $pad={6}><Txt $ls={-0.43}>Tamanho</Txt></HeaderCell>
          </ListHeader>
          {groups.map((g) => (
            <React.Fragment key={g.title}>
              <GroupRow><Chev d="down" s={12} c="#9a9a9a" w={1} /><Txt $ls={g.ls} $lift={3}>{g.title}</Txt></GroupRow>
              {g.items.map((f) => (
                <FileSlot key={f.name}>
                  <FileRow $selected={f.selected}>
                    {f.icon}
                    <FileName $ls={-0.22}>{f.name}</FileName>
                    <Txt $ls={-0.52}>{f.date}</Txt>
                    <Txt $ls={-0.3}>{f.type}</Txt>
                    <Size $ls={-0.55}>{f.size}</Size>
                  </FileRow>
                </FileSlot>
              ))}
            </React.Fragment>
          ))}
        </List>
        <ListScroll />
      </ListArea>
    </Body>
    <Footer>
      <NameLabel>Nome:</NameLabel>
      <Combo $h={24}><Txt $ls={-0.2}>coelhoamigu.jpg</Txt><Chev d="down" c="#c8c8c8" w={1.2} /></Combo>
      <FilterCombo $h={23}><Txt $ls={-0.38}>Todos os arquivos</Txt><Chev d="down" c="#c8c8c8" w={1.2} /></FilterCombo>
      <Buttons>
        <DialogButton $main><MainLabel $ls={-0.25} $lift={2}>Abrir</MainLabel><Split><Caret /></Split></DialogButton>
        <DialogButton><Txt $ls={-0.3} $lift={2}>Cancelar</Txt></DialogButton>
      </Buttons>
      <Grip width="8" height="8" viewBox="0 0 8 8" fill="#c4c4c4">
        <path d="M6 0h2v2H6zM3 3h2v2H3zM6 3h2v2H6zM0 6h2v2H0zM3 6h2v2H3zM6 6h2v2H6z" />
      </Grip>
    </Footer>
  </Dialog>
);

const SystemTaskbar = () => (
  <Taskbar>
    <Widget>
      <LeagueIcon />
      <TwoLines>
        <Txt $ls={0}>NFO - MUN</Txt>
        <Txt $ls={-0.3}>Em 2 horas</Txt>
      </TwoLines>
    </Widget>
    <Start><WindowsIcon /></Start>
    <SearchPill>
      <Magnifier s={15} c="#d8d7f0" w={1.5} />
      <Txt $ls={-0.4}>Pesquisar</Txt>
      <Bowl />
    </SearchPill>
    <Apps>
      {apps.map((a, i) => <TaskButton key={i} $state={a.state}>{a.icon}</TaskButton>)}
    </Apps>
    <Tray>
      <TrayIcons>
        <Chev d="up" w={1.3} s={12} />
        <svg width="17" height="14" viewBox="0 0 17 14">
          <path fill="#8d8bc8" d="M4 12a3.500 3.500 0 0 1 0-7 5 5 0 0 1 9-.5A3.800 3.800 0 0 1 13.500 12z" />
          <path stroke="#353399" strokeWidth="2.500" d="M3 0l13 12" /><path stroke="#e6e5f5" strokeWidth="1.200" d="M2.500 1L15 13" />
        </svg>
        <svg width="17" height="17" viewBox="0 0 17 17" fill="none" stroke="#fff" strokeWidth="1.100">
          <path d="M10 1.500H2.500a1.500 1.500 0 0 0-1.500 1.500v8.500h13.500V9M5.500 11.500v4M9.500 11.500v4M3.500 16h8.500M12 1.500h4v5h-4zM14 6.500V9" />
        </svg>
        <svg width="18" height="14" viewBox="0 0 18 14" fill="none" stroke="#fff" strokeWidth="1.100">
          <path d="M1 5h2.500L7 2v10L3.500 9H1zM9 5a3 3 0 0 1 0 4M11 3a5.500 5.500 0 0 1 0 8" /><path stroke="#7a78c0" d="M13.500 1.500a8 8 0 0 1 0 11" />
        </svg>
      </TrayIcons>
      <TwoLines $right>
        <Txt $ls={-0.35}>14:09</Txt>
        <Txt $ls={-0.1}>01/04/2025</Txt>
      </TwoLines>
    </Tray>
  </Taskbar>
);

export default function App() {
  return (
    <>
      <GlobalStyle />
      <Desktop>
        <BrowserWindow />
        <DialogShadow />
        <OpenDialog />
        <SystemTaskbar />
      </Desktop>
    </>
  );
}
